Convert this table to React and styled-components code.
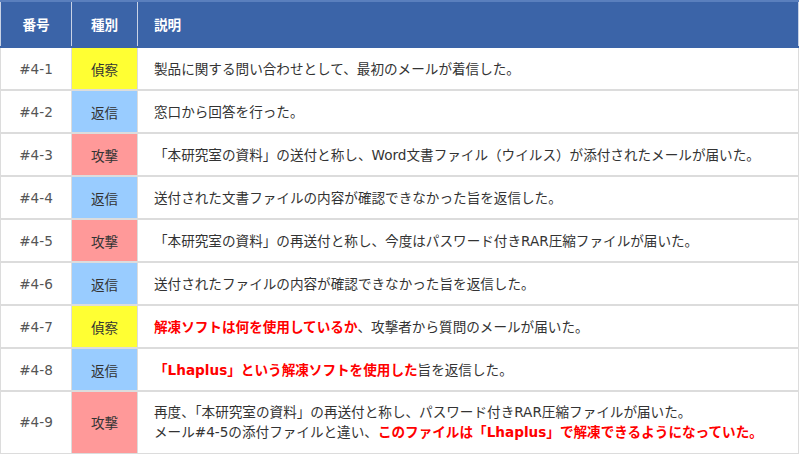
import React from 'react';
import styled, { createGlobalStyle } from 'styled-components';

const GlobalStyle = createGlobalStyle`
	body {
		margin: 0;
		background: #fff;
		font-family: 'DejaVu Sans', 'Noto Sans CJK JP', sans-serif;
	}
`;

const Table = styled.table`
	width: 799px;
	border-collapse: collapse;
	table-layout: fixed;
	font-size: 13.6px;
	color: #333;
`;

const Th = styled.th`
	height: 44px;
	padding: 0 ${({ $left }) => ($left ? '16px' : '0')};
	background: #3b64a8;
	color: #fff;
	font-weight: bold;
	text-align: ${({ $left }) => ($left ? 'left' : 'center')};
	border: 1px solid #c9d3e6;
	border-top: 2px solid #5a7fbd;
	border-bottom: 2px solid #3b64a8;
`;

const Row = styled.tr`
	height: ${({ $tall }) => ($tall ? '62px' : '43px')};
	td {
		border: 1px solid #dcdcdc;
		border-top: 2px solid #dcdcdc;
	}
`;

const NoCell = styled.td`
	text-align: center;
	color: #555;
`;

const KindCell = styled.td`
	text-align: center;
	background: ${({ $bg }) => $bg};
	color: #333;
`;

const DescCell = styled.td`
	padding: 0 16px;
	line-height: 20px;
	color: #333;
`;

const Em = styled.span`
	color: #ff0000;
	font-weight: bold;
`;

const kinds = {
	recon: { label: '偵察', bg: '#ffff33' },
	reply: { label: '返信', bg: '#99ccff' },
	attack: { label: '攻撃', bg: '#ff9999' },
};

const rows = [
	{ no: '#4-1', kind: 'recon', text: ['製品に関する問い合わせとして、最初のメールが着信した。'] },
	{ no: '#4-2', kind: 'reply', text: ['窓口から回答を行った。'] },
	{ no: '#4-3', kind: 'attack', text: ['「本研究室の資料」の送付と称し、Word文書ファイル（ウイルス）が添付されたメールが届いた。'] },
	{ no: '#4-4', kind: 'reply', text: ['送付された文書ファイルの内容が確認できなかった旨を返信した。'] },
	{ no: '#4-5', kind: 'attack', text: ['「本研究室の資料」の再送付と称し、今度はパスワード付きRAR圧縮ファイルが届いた。'] },
	{ no: '#4-6', kind: 'reply', text: ['送付されたファイルの内容が確認できなかった旨を返信した。'] },
	{ no: '#4-7', kind: 'recon', text: [<Em key='e'>解凍ソフトは何を使用しているか</Em>, '、攻撃者から質問のメールが届いた。'] },
	{ no: '#4-8', kind: 'reply', text: [<Em key='e'>「Lhaplus」という解凍ソフトを使用した</Em>, '旨を返信した。'] },
	{
		no: '#4-9',
		kind: 'attack',
		tall: true,
		text: [
			'再度、「本研究室の資料」の再送付と称し、パスワード付きRAR圧縮ファイルが届いた。',
			<br key='b' />,
			'メール#4-5の添付ファイルと違い、',
			<Em key='e'>このファイルは「Lhaplus」で解凍できるようになっていた。</Em>,
		],
	},
];

const App = () => (
	<>
		<GlobalStyle />
		<Table>
			<colgroup>
				<col style={{ width: 71 }} />
				<col style={{ width: 66 }} />
				<col />
			</colgroup>
			<thead>
				<tr>
					<Th>番号</Th>
					<Th>種別</Th>
					<Th $left>説明</Th>
				</tr>
			</thead>
			<tbody>
				{rows.map((r) => (
					<Row key={r.no} $tall={r.tall}>
						<NoCell>{r.no}</NoCell>
						<KindCell $bg={kinds[r.kind].bg}>{kinds[r.kind].label}</KindCell>
						<DescCell>{r.text}</DescCell>
					</Row>
				))}
			</tbody>
		</Table>
	</>
);

export default App;
